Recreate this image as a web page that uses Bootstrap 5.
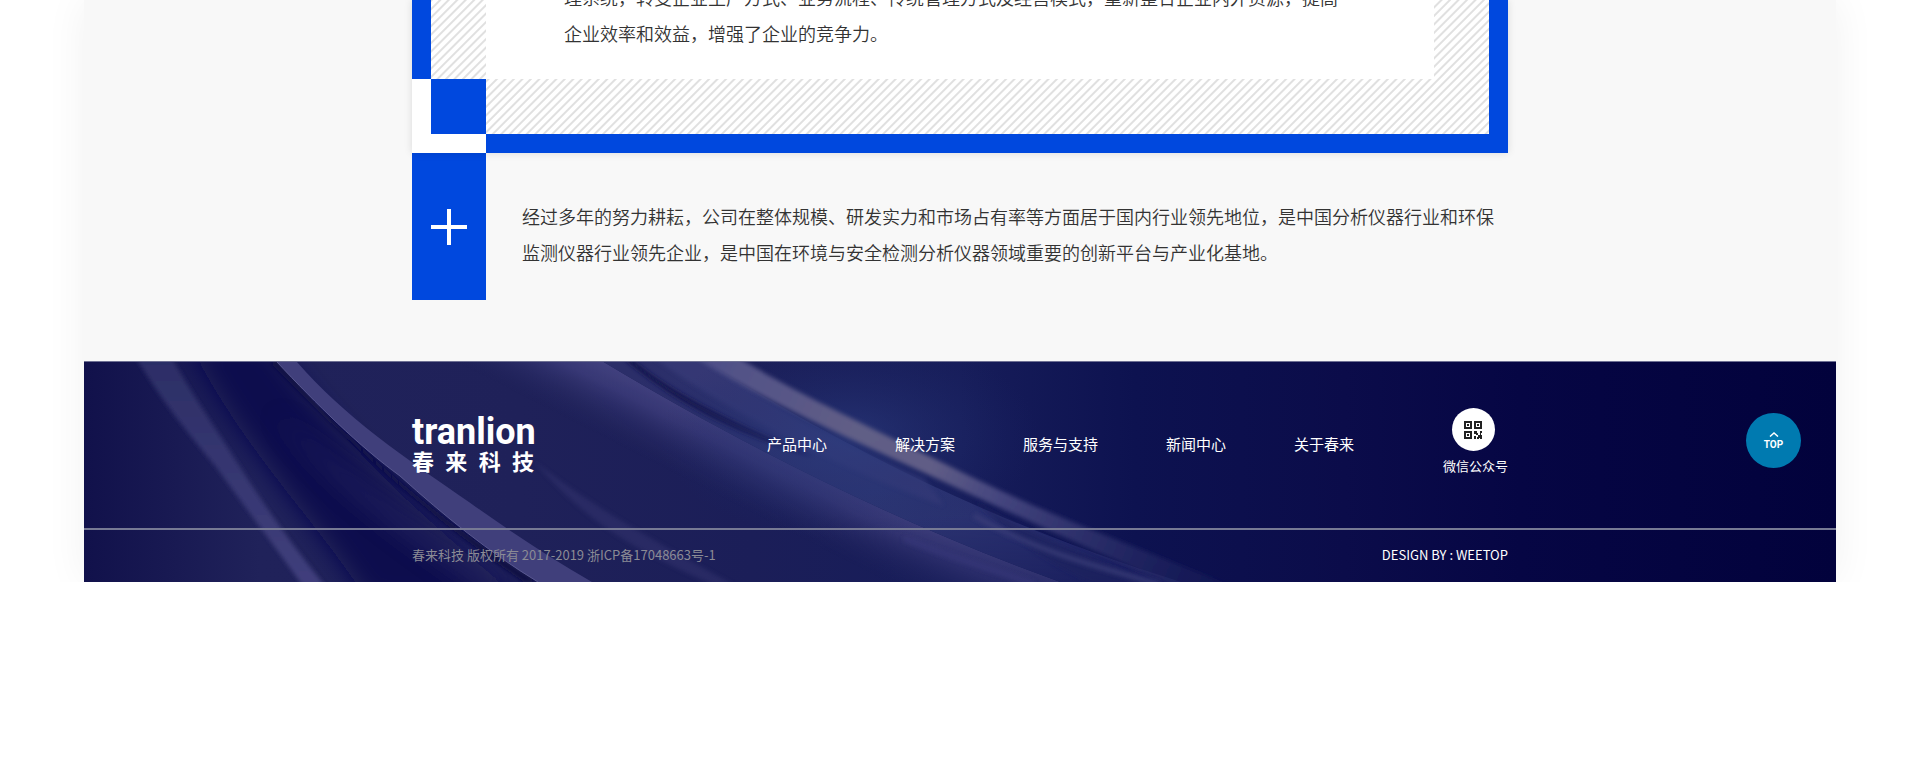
<!DOCTYPE html>
<html lang="zh-CN">
<head>
<meta charset="utf-8">
<meta name="viewport" content="width=device-width, initial-scale=1">
<title>春来科技</title>
<link href="https://cdn.jsdelivr.net/npm/bootstrap@5.3.0/dist/css/bootstrap.min.css" rel="stylesheet">
<style>
  :root { --brand: #0048de; }
  body { background: #fff; color: #333; font-family: "Noto Sans CJK SC", "Noto Sans", sans-serif; }
  .sheet { width: 91.25%; background: #f8f8f8; box-shadow: 0 0 40px rgba(0, 0, 0, .06); }
  .wrap { width: 100%; max-width: 1096px; margin: 0 auto; }
  .copy { font-size: 18px; line-height: 36px; font-weight: 350; margin: 0; }

  /* Blue frame with hatched lining */
  .frame { border: 19px solid var(--brand); border-top: 0; padding: 0 55px 55px; box-shadow: 0 0 8px rgba(0, 0, 0, .12);
    background: repeating-linear-gradient(135deg, #e0e0e0 0 1px, #fff 2px 5px, #e0e0e0 6px) padding-box; }
  .frame-body { background: #fff; padding: 0 90px 28px 78px; overflow: hidden; }
  .frame-body .copy { margin-top: -21px; }
  .corner { position: absolute; left: -19px; bottom: -19px; width: 74px; height: 74px; background: #fff; padding: 0 0 19px 19px; }
  .corner-fill { height: 55px; background: var(--brand); }

  .plus-tile { width: 74px; min-height: 147px; background: var(--brand); }
  .plus-copy { padding: 45px 0 0 36px; }
  .intro { padding-bottom: 61px; }

  /* Footer */
  .foot { background: #050540; border-top: 1px solid #6f7194; color: #fff; overflow: hidden; }
  .foot-art { position: absolute; inset: 0; width: 100%; height: 100%; }
  .foot-main { min-height: 166px; padding-bottom: 2px; }
  .foot-base { border-top: 2px solid #777a94; min-height: 54px; padding-bottom: 2px; font-size: 13px; line-height: 20px; }
  .brand-logo { width: 122px; }
  .brand-latin { font: 700 36px/32px Roboto, sans-serif; }
  .brand-cn { font-size: 22px; line-height: 24px; font-weight: 700; }
  .foot-nav { gap: 68px; margin-right: 89px; font-size: 15px; line-height: 24px; }
  .qr-link { font-size: 13px; line-height: 20px; gap: 5px; }
  .qr-dot { width: 43px; height: 43px; }
  .muted-copy { color: #8b8b95; }
  .to-top { position: absolute; right: 35px; top: 51px; width: 55px; height: 55px; background: #007ab0; color: #fff;
    font: 700 10px/10px Roboto, sans-serif; gap: 3px; }
</style>
</head>
<body>
<div class="sheet mx-auto">
  <main class="wrap intro">
    <section class="frame position-relative">
      <div class="frame-body">
        <p class="copy">理系统，转变企业生产方式、业务流程、传统管理方式及经营模式，重新整合企业内外资源，提高企业效率和效益，增强了企业的竞争力。</p>
      </div>
      <div class="corner"><div class="corner-fill"></div></div>
    </section>
    <section class="d-flex">
      <div class="plus-tile flex-shrink-0 d-flex align-items-center justify-content-center">
        <svg width="36" height="36" viewBox="0 0 36 36" aria-hidden="true"><path d="M0 18h36M18 0v36" stroke="#fff" stroke-width="4"/></svg>
      </div>
      <div class="plus-copy">
        <p class="copy">经过多年的努力耕耘，公司在整体规模、研发实力和市场占有率等方面居于国内行业领先地位，是中国分析仪器行业和环保监测仪器行业领先企业，是中国在环境与安全检测分析仪器领域重要的创新平台与产业化基地。</p>
      </div>
    </section>
  </main>

  <footer class="foot position-relative">
    <svg class="foot-art" viewBox="0 0 1752 222" preserveAspectRatio="none" aria-hidden="true">
      <defs>
        <linearGradient id="base" x1="0" x2="1" y1="0" y2="0">
          <stop offset="0" stop-color="#11114b"/><stop offset=".1" stop-color="#20225a"/>
          <stop offset=".25" stop-color="#1f2159"/><stop offset=".38" stop-color="#1b1e58"/><stop offset=".5" stop-color="#171d5a"/>
          <stop offset=".6" stop-color="#0d1250"/><stop offset=".72" stop-color="#0b0c4a"/>
          <stop offset=".82" stop-color="#060644"/><stop offset="1" stop-color="#02023c"/>
        </linearGradient>
        <linearGradient id="ribC" gradientUnits="userSpaceOnUse" x1="700" y1="80" x2="664" y2="150">
          <stop offset="0" stop-color="#484784"/><stop offset=".4" stop-color="#3a3a78" stop-opacity=".9"/><stop offset="1" stop-color="#24275f" stop-opacity="0"/>
        </linearGradient>
        <linearGradient id="midBlue" gradientUnits="userSpaceOnUse" x1="560" y1="0" x2="1040" y2="222">
          <stop offset="0" stop-color="#2b2e69"/><stop offset=".5" stop-color="#2f3875"/><stop offset="1" stop-color="#25296a"/>
        </linearGradient>
        <linearGradient id="fadeDown" x1="0" y1="0" x2="0" y2="1">
          <stop offset="0" stop-color="#fff"/><stop offset=".7" stop-color="#eee"/><stop offset="1" stop-color="#888"/>
        </linearGradient>
        <mask id="sweepFade"><rect width="1752" height="222" fill="url(#fadeDown)"/></mask>
        <linearGradient id="ribD" gradientUnits="userSpaceOnUse" x1="620" y1="0" x2="1130" y2="222">
          <stop offset="0" stop-color="#4e4f88"/><stop offset=".3" stop-color="#615e86"/>
          <stop offset=".45" stop-color="#605d86"/><stop offset=".58" stop-color="#45467f"/><stop offset="1" stop-color="#25296540"/>
        </linearGradient>
        <linearGradient id="ribA" x1="0" y1="0" x2="0" y2="1">
          <stop offset="0" stop-color="#2c2e66"/><stop offset="1" stop-color="#403f7c"/>
        </linearGradient>
        <radialGradient id="glow"><stop offset="0" stop-color="#2c3d80" stop-opacity=".65"/><stop offset="1" stop-color="#1c2868" stop-opacity="0"/></radialGradient>
        <filter id="b2" x="-20%" y="-20%" width="140%" height="140%"><feGaussianBlur stdDeviation="2"/></filter>
        <filter id="b6" x="-30%" y="-30%" width="160%" height="160%"><feGaussianBlur stdDeviation="12"/></filter>
      </defs>
      <rect width="1752" height="222" fill="url(#base)"/>
      <!-- deep folds -->
      <path d="M105 -20H185C250 75 340 160 440 242H285C225 150 160 90 105 -20Z" fill="#11114d" filter="url(#b6)"/>
      <path d="M190 50C250 105 320 155 430 228L400 230C320 175 250 125 190 50Z" fill="#303069" opacity=".6" filter="url(#b6)"/>
      <path d="M450 100C500 140 560 175 650 225H630C550 190 500 160 450 100Z" fill="#34366f" opacity=".5" filter="url(#b2)"/>
      <!-- left ribbon -->
      <path d="M52 -4C85 50 108 76 132 106C160 145 190 185 219 226H241C212 190 185 152 160 112C130 64 110 36 88 -4Z" fill="url(#ribA)" filter="url(#b2)"/>
      <!-- sharp ribbon -->
      <path d="M193 0C270 86 360 165 454 222H440C350 160 262 80 186 0Z" fill="#0c0c43" filter="url(#b2)"/>
      <path d="M193 0C232 42 275 85 316 115C360 155 405 192 454 222H508C465 197 425 170 386 142C320 96 260 55 213 0Z" fill="#403f7b"/>
      <path d="M193 0C232 42 275 85 316 115C360 155 405 192 454 222" fill="none" stroke="#5a5990" stroke-width="1"/>
      <!-- wide sweep -->
      <g mask="url(#sweepFade)">
        <path d="M518 -1C650 79 810 162 979 223H780C600 170 440 110 300 -1Z" fill="url(#ribC)"/>
        <path d="M518 -1C650 79 810 162 979 223H1100C900 160 760 85 620 -1Z" fill="url(#midBlue)"/>
      </g>
      <path d="M548 -3C590 34 650 60 730 96C665 78 600 48 540 -3Z" fill="#12144e" filter="url(#b2)"/>
      <path d="M570 -4C640 48 760 110 860 145L840 117C760 84 690 50 622 -4Z" fill="#3a3d7a" opacity=".6" filter="url(#b2)"/>
      <ellipse cx="765" cy="75" rx="190" ry="105" fill="url(#glow)"/>
      <!-- bright ribbon -->
      <path d="M655 -4C720 36 800 72 894 119C970 156 1050 186 1149 226H1090C1030 200 940 158 892 136C800 92 690 46 612 -4Z" fill="url(#ribD)" filter="url(#b2)"/>
      <path d="M890 140C950 178 1020 200 1065 224H1010C960 202 930 176 890 140Z" fill="#1e225d" opacity=".6" filter="url(#b2)"/>
      <path d="M890 155C950 190 1010 206 1075 224" fill="none" stroke="#3a3c78" stroke-width="5" opacity=".8" filter="url(#b2)"/>
      <path d="M820 178C870 198 910 210 950 224" fill="none" stroke="#38397a" stroke-width="6" opacity=".6" filter="url(#b2)"/>
    </svg>
    <div class="position-relative">
      <div class="wrap foot-main d-flex align-items-center">
        <a href="#" class="brand-logo text-white text-decoration-none">
          <span class="brand-latin d-block">tranlion</span>
          <span class="brand-cn d-flex justify-content-between"><span>春</span><span>来</span><span>科</span><span>技</span></span>
        </a>
        <nav class="foot-nav ms-auto d-flex text-nowrap" aria-label="页脚导航">
          <a href="#" class="text-white text-decoration-none">产品中心</a>
          <a href="#" class="text-white text-decoration-none">解决方案</a>
          <a href="#" class="text-white text-decoration-none">服务与支持</a>
          <a href="#" class="text-white text-decoration-none">新闻中心</a>
          <a href="#" class="text-white text-decoration-none">关于春来</a>
        </nav>
        <a href="#" class="qr-link d-flex flex-column align-items-center text-white text-decoration-none text-nowrap pb-1">
          <span class="qr-dot me-1 rounded-circle bg-white d-flex align-items-center justify-content-center">
            <svg width="18" height="18" viewBox="0 0 18 18" aria-hidden="true">
              <path fill="#222" fill-rule="evenodd" d="M0 0h8v8H0zM2 2v4h4V2zM10 0h8v8h-8zM12 2v4h4V2zM0 10h8v8H0zM2 12v4h4v-4z"/>
              <path fill="#222" d="M3 3h2v2H3zM13 3h2v2h-2zM3 13h2v2H3zM10 10h3v2h1v2h-2v-1h-2zM16 10h2v2h-2zM14 14h2v-2h1v2h1v4h-2v-1h-1v1h-2v-2h1zM10 15h2v3h-2z"/>
            </svg>
          </span>
          <span>微信公众号</span>
        </a>
      </div>
      <div class="foot-base d-flex">
        <div class="wrap d-flex justify-content-between align-items-center">
          <span class="muted-copy">春来科技 版权所有 2017-2019 浙ICP备17048663号-1</span>
          <a href="#" class="text-white text-decoration-none">DESIGN BY : WEETOP</a>
        </div>
      </div>
    </div>
    <button type="button" class="to-top btn rounded-circle border-0 p-0 d-flex flex-column align-items-center justify-content-center">
      <svg width="10" height="5" viewBox="0 0 10 5" aria-hidden="true"><path d="M1 4.500L5 1l4 3.500" fill="none" stroke="#fff" stroke-width="1.500"/></svg>
      TOP
    </button>
  </footer>
</div>
<script src="https://cdn.jsdelivr.net/npm/bootstrap@5.3.0/dist/js/bootstrap.bundle.min.js"></script>
</body>
</html>
